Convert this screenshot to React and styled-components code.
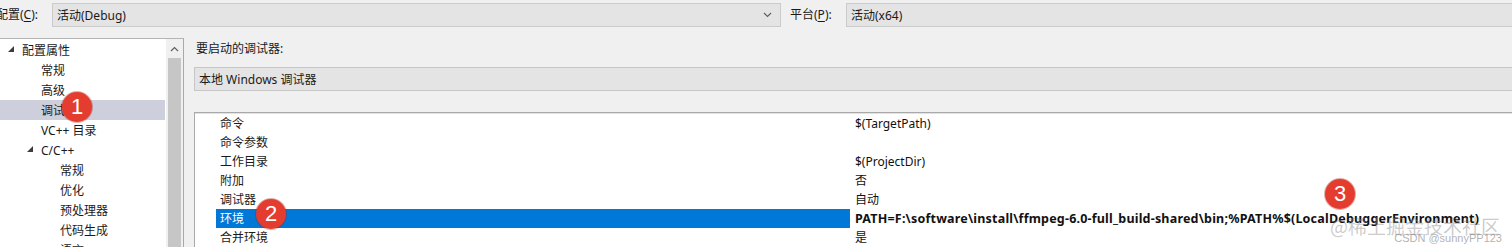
import React from 'react'
import styled, { createGlobalStyle } from 'styled-components'

const GlobalStyle = createGlobalStyle`
  html, body {
    margin: 0;
    padding: 0;
    overflow: hidden;
    background: #f0f0f0;
  }
  body {
    font-family: "Noto Sans", "Noto Sans CJK SC", sans-serif;
    font-size: 12px;
    color: #1a1a1a;
  }
`

const Page = styled.div`
  position: relative;
  width: 1512px;
  height: 247px;
  overflow: hidden;
  background: #f0f0f0;
`

const TopBar = styled.div`
  display: grid;
  grid-template-columns: 52px 729px 65px 1fr;
  align-items: center;
  align-content: start;
  height: 30px;
  padding-top: 3px;
  box-sizing: border-box;
`

const FieldLabel = styled.div`
  white-space: nowrap;
  margin-left: ${p => p.$offset}px;
  line-height: 24px;
  u { text-decoration: underline; text-underline-offset: 2px; }
`

const ComboBox = styled.div`
  display: flex;
  align-items: center;
  justify-content: space-between;
  height: 24px;
  box-sizing: border-box;
  padding: 0 8px 0 4px;
  background: #e4e4e4;
  border: 1px solid #cbcbcb;
  white-space: nowrap;
  margin-right: ${p => (p.$open ? '-2px' : '0')};
`

const Body = styled.div`
  display: flex;
  align-items: flex-start;
  gap: 10px;
  margin-top: 8px;
`

const TreePanel = styled.div`
  display: flex;
  width: 184px;
  height: 220px;
  box-sizing: border-box;
  background: #fff;
  border-top: 1px solid #b4b4b4;
  border-right: 1px solid #a8a8a8;
  flex-shrink: 0;
`

const TreeList = styled.div`
  flex: 1;
  padding-top: 1px;
`

const TreeRow = styled.div`
  display: flex;
  align-items: center;
  height: 20px;
  padding-left: ${p => 8 + p.$level * 19}px;
  margin-right: 1px;
  background: ${p => (p.$selected ? '#cdd0dc' : 'transparent')};
  white-space: nowrap;
`

const Expander = styled.span`
  display: inline-flex;
  width: 14px;
  align-items: center;
  svg { margin-top: -2px; }
`

const ScrollBar = styled.div`
  display: flex;
  flex-direction: column;
  width: 17px;
  background: #f0f0f0;
`

const ScrollArrow = styled.div`
  display: flex;
  align-items: center;
  justify-content: center;
  height: 19px;
`

const ScrollThumb = styled.div`
  flex: 1;
  margin: 0 2px;
  background: #c6c6c6;
`

const SettingsPane = styled.div`
  flex: 1;
  padding-top: 2px;
  margin-right: -4px;
`

const PaneLabel = styled.div`
  height: 18px;
  line-height: 18px;
  padding-left: 2px;
`

const DebuggerBox = styled(ComboBox)`
  margin-top: 9px;
  padding-left: 4px;
  border-color: #c6c6c6;
`

const Grid = styled.div`
  margin-top: 21px;
  background: #fff;
  border-top: 1px solid #a9a9a9;
  border-left: 1px solid #a9a9a9;
  box-shadow: inset 0 1px 0 #e2e2e2;
  padding-top: 1px;
  height: 140px;
`

const GridRow = styled.div`
  display: grid;
  grid-template-columns: 21px 634px 1fr;
  height: 19px;
  line-height: 19px;
  white-space: nowrap;
`

const NameCell = styled.div`
  padding-left: 4px;
  background: ${p => (p.$selected ? '#0078d7' : 'transparent')};
  color: ${p => (p.$selected ? '#fff' : '#1a1a1a')};
`

const ValueCell = styled.div`
  padding-left: 5px;
  color: #111;
  ${p => p.$bold && `
    font-weight: 700;
    font-size: 12.5px;
    letter-spacing: 0.2px;
  `}
`

const Badge = styled.div`
  position: absolute;
  left: ${p => p.$x - 15}px;
  top: ${p => p.$y - 15}px;
  width: 30px;
  height: 30px;
  border-radius: 50%;
  background: #e43d2f;
  box-shadow: 0 0 0 1px rgba(170, 30, 20, 0.35);
  color: #fff;
  font-family: "Liberation Sans", Arial, sans-serif;
  font-size: 22px;
  line-height: 30px;
  text-align: center;
`

const Watermark = styled.div`
  position: absolute;
  right: 10px;
  bottom: 3px;
  display: flex;
  flex-direction: column;
  align-items: flex-end;
  pointer-events: none;
`

const WatermarkMain = styled.div`
  font-family: "Noto Sans CJK SC", sans-serif;
  font-size: 19px;
  line-height: 20px;
  color: rgba(140, 140, 140, 0.45);
  margin-right: 2px;
`

const WatermarkSub = styled.div`
  font-family: "Liberation Sans", Arial, sans-serif;
  font-size: 11px;
  line-height: 12px;
  margin-top: -4px;
  color: rgba(110, 110, 110, 0.55);
`

const Triangle = () => (
  <svg width="6" height="6" viewBox="0 0 6 6">
    <polygon points="6,0 6,6 0,6" fill="#3c3c3c" />
  </svg>
)

const Chevron = ({ up }) => (
  <svg width="9" height="6" viewBox="0 0 9 6">
    <polyline
      points={up ? '1,5 4.5,1.5 8,5' : '1,1 4.5,4.5 8,1'}
      fill="none"
      stroke="#606060"
      strokeWidth="1.2"
    />
  </svg>
)

const tree = [
  { label: '配置属性', level: 0, expanded: true },
  { label: '常规', level: 1 },
  { label: '高级', level: 1 },
  { label: '调试', level: 1, selected: true },
  { label: 'VC++ 目录', level: 1 },
  { label: 'C/C++', level: 1, expanded: true },
  { label: '常规', level: 2 },
  { label: '优化', level: 2 },
  { label: '预处理器', level: 2 },
  { label: '代码生成', level: 2 },
  { label: '语言', level: 2 },
]

const props = [
  { name: '命令', value: '$(TargetPath)' },
  { name: '命令参数', value: '' },
  { name: '工作目录', value: '$(ProjectDir)' },
  { name: '附加', value: '否' },
  { name: '调试器', value: '自动' },
  {
    name: '环境',
    value: 'PATH=F:\\software\\install\\ffmpeg-6.0-full_build-shared\\bin;%PATH%$(LocalDebuggerEnvironment)',
    selected: true,
  },
  { name: '合并环境', value: '是' },
]

export default function App() {
  return (
    <Page>
      <GlobalStyle />
      <TopBar>
        <FieldLabel $offset={-4}>配置(<u>C</u>):</FieldLabel>
        <ComboBox>
          <span>活动(Debug)</span>
          <Chevron />
        </ComboBox>
        <FieldLabel $offset={9}>平台(<u>P</u>):</FieldLabel>
        <ComboBox $open>
          <span>活动(x64)</span>
        </ComboBox>
      </TopBar>

      <Body>
        <TreePanel>
          <TreeList>
            {tree.map((item, i) => (
              <TreeRow key={i} $level={item.level} $selected={item.selected}>
                <Expander>{item.expanded && <Triangle />}</Expander>
                {item.label}
              </TreeRow>
            ))}
          </TreeList>
          <ScrollBar>
            <ScrollArrow>
              <Chevron up />
            </ScrollArrow>
            <ScrollThumb />
          </ScrollBar>
        </TreePanel>

        <SettingsPane>
          <PaneLabel>要启动的调试器:</PaneLabel>
          <DebuggerBox $open>
            <span>本地 Windows 调试器</span>
          </DebuggerBox>
          <Grid>
            {props.map((p, i) => (
              <GridRow key={i}>
                <div />
                <NameCell $selected={p.selected}>{p.name}</NameCell>
                <ValueCell $bold={p.selected}>{p.value}</ValueCell>
              </GridRow>
            ))}
          </Grid>
        </SettingsPane>
      </Body>

      <Badge $x={77} $y={107}>1</Badge>
      <Badge $x={271} $y={214}>2</Badge>
      <Badge $x={1340} $y={194}>3</Badge>

      <Watermark>
        <WatermarkMain>@稀土掘金技术社区</WatermarkMain>
        <WatermarkSub>CSDN @sunnyPP123</WatermarkSub>
      </Watermark>
    </Page>
  )
}
